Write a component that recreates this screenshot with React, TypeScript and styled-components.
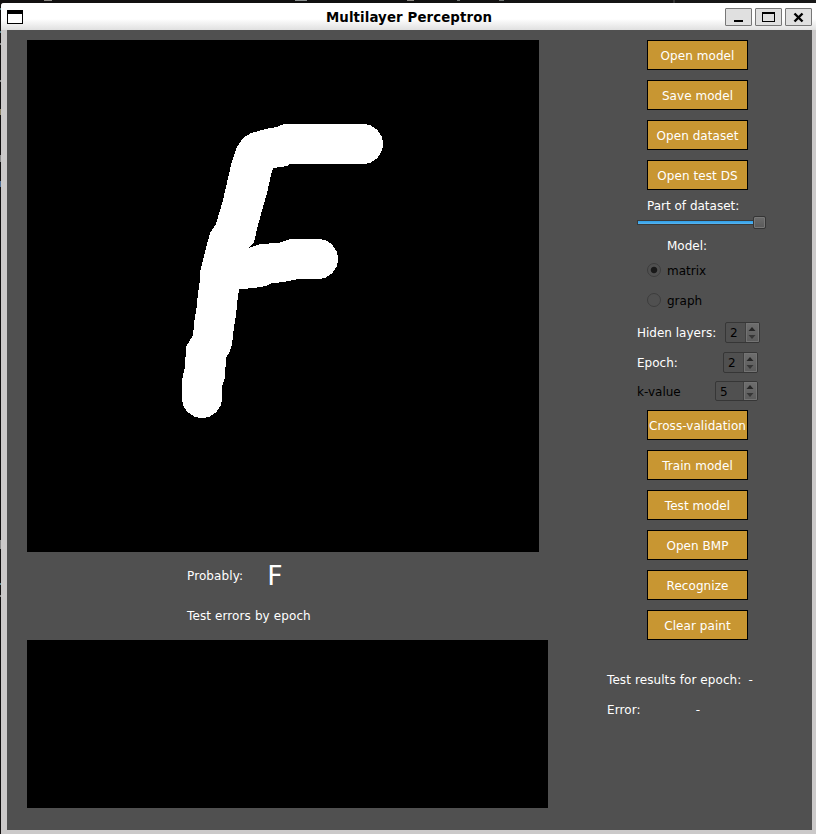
import React from "react";
import styled, { createGlobalStyle } from "styled-components";

const GlobalStyle = createGlobalStyle`
  * { box-sizing: border-box; }
  html, body { margin: 0; padding: 0; overflow: hidden; background: #0d0d0d; }
  body { font: 12px/14px "DejaVu Sans", sans-serif; color: #fff; }
`;

const Desktop = styled.div`
  width: 816px;
  height: 834px;
  padding: 3px 0 0 1px;
  background:
    linear-gradient(#8a8782, #8a8782) 44px 0 / 8px 1px no-repeat,
    linear-gradient(#8a8f8f, #8a8f8f) 295px 0 / 12px 1px no-repeat,
    linear-gradient(#8a8782, #8a8782) 407px 0 / 7px 1px no-repeat,
    linear-gradient(#6f7472, #6f7472) 457px 0 / 3px 1px no-repeat,
    linear-gradient(#6f7472, #6f7472) 499px 0 / 5px 1px no-repeat,
    linear-gradient(#333, #333) 673px 0 / 2px 3px no-repeat,
    linear-gradient(#5d8791, #5d8791) 0 8px / 1px 2px no-repeat,
    linear-gradient(#5d8791, #5d8791) 0 31px / 1px 2px no-repeat,
    linear-gradient(#888, #888) 0 43px / 1px 2px no-repeat,
    linear-gradient(#888, #888) 0 80px / 1px 2px no-repeat,
    linear-gradient(#8c8468, #8c8468) 0 109px / 1px 6px no-repeat,
    linear-gradient(#888, #888) 0 155px / 1px 7px no-repeat,
    linear-gradient(#4f6f96, #4f6f96) 0 181px / 1px 6px no-repeat,
    linear-gradient(#888, #888) 0 540px / 1px 9px no-repeat,
    linear-gradient(#5d8791, #5d8791) 0 583px / 1px 2px no-repeat,
    linear-gradient(#888, #888) 0 595px / 1px 2px no-repeat,
    linear-gradient(90deg, #121010, #101010 40%, #171717);
`;

const Window = styled.div`
  display: flex;
  flex-direction: column;
  height: 831px;
  background: #cbc9c9;
  border-top-left-radius: 3px;
  overflow: hidden;
`;

const TitleBar = styled.header`
  flex: none;
  height: 27px;
  display: grid;
  grid-template-columns: 91px 1fr 91px;
  align-items: center;
  background: linear-gradient(#fff 0, #fff 16px, #f6f6f6 19px, #e0e0e0 27px);
`;

const WindowIcon = styled.svg`
  display: block;
  margin-left: 6px;
`;

const Title = styled.h1`
  margin: 0;
  padding: 2px 0 0 1px;
  font-size: 13.33px;
  line-height: 16px;
  font-weight: 700;
  letter-spacing: 0.11px;
  text-align: center;
  color: #000;
`;

const WindowControls = styled.div`
  display: flex;
  gap: 3px;
  padding-top: 1px;
`;

const ControlButton = styled.button`
  width: 27px;
  height: 18px;
  padding: 0;
  border: 1px solid #777;
  border-radius: 1px;
  background: #e0e0e0;

  svg { display: block; }
`;

const Body = styled.main`
  display: flex;
  width: 805px;
  height: 800px;
  margin-left: 6px;
  padding: 10px 0 0 20px;
  background: #505050;
`;

const Workspace = styled.section`
  width: 580px;
  flex: none;
  letter-spacing: 0.11px;
`;

const Canvas = styled.div`
  width: 512px;
  height: 512px;
  background: #000;

  svg { display: block; }
`;

const CanvasCaption = styled.div`
  display: flex;
  align-items: center;
  height: 48px;
  padding-left: 160px;
`;

const Guess = styled.span`
  margin-left: 24px;
  font-size: 26.67px;
  line-height: 30px;
`;

const ChartCaption = styled.div`
  height: 40px;
  padding: 9px 0 0 160px;
`;

const ErrorChart = styled.div`
  width: 521px;
  height: 168px;
  background: #000;
`;

const Sidebar = styled.aside`
  width: 205px;
  display: flex;
  flex-direction: column;
`;

const ButtonStack = styled.div`
  display: flex;
  flex-direction: column;
  gap: 10px;
  margin-left: 40px;
`;

const ModelActions = styled(ButtonStack)`
  margin-top: 3px;
`;

const ActionButton = styled.button`
  width: 101px;
  height: 30px;
  padding: 1px 0 0;
  border: 1px solid #000;
  background: #c89632;
  color: #fff;
  font: inherit;
  letter-spacing: 0.06px;
  text-align: center;
  white-space: nowrap;
`;

const Caption = styled.div<{ $indent: number; $height: number }>`
  height: ${(p) => p.$height}px;
  padding-left: ${(p) => p.$indent}px;
  display: flex;
  align-items: center;
`;

const Slider = styled.div`
  display: flex;
  align-items: center;
  width: 129px;
  height: 13px;
  margin: -6px 0 8px 30px;
`;

const SliderTrack = styled.div`
  flex: 1;
  height: 5px;
  border: 1px solid #3a3a3a;
  border-right: 0;
  border-radius: 1px 0 0 1px;
  background: linear-gradient(#2f9ee8, #57b5f0);
`;

const SliderHandle = styled.div`
  width: 13px;
  height: 13px;
  border: 1px solid #353535;
  border-radius: 2px;
  background: linear-gradient(#6c6c6c, #5a5a5a);
  box-shadow: inset 0 0 0 1px #777;
`;

const RadioRow = styled.label`
  display: flex;
  align-items: center;
  gap: 6px;
  height: 30px;
  padding-left: 40px;
  color: #000;
`;

const RadioText = styled.span`
  padding-top: 2px;
`;

const RadioDot = styled.span<{ $checked?: boolean }>`
  width: 14px;
  height: 14px;
  border: 1px solid #3d3d3d;
  border-radius: 50%;
  background: ${(p) =>
    p.$checked ? "radial-gradient(circle, #191919 0 2.8px, #505050 3.7px)" : "#505050"};
`;

const SpinRow = styled.div<{ $dark?: boolean; $height: number }>`
  display: flex;
  align-items: center;
  height: ${(p) => p.$height}px;
  padding-left: 30px;
  color: ${(p) => (p.$dark ? "#000" : "#fff")};
`;

const SpinLabel = styled.span<{ $width: number; $drop: number }>`
  width: ${(p) => p.$width}px;
  padding-top: ${(p) => p.$drop}px;
  white-space: nowrap;
`;

const SpinBox = styled.div<{ $width: number; $height: number }>`
  display: flex;
  justify-content: space-between;
  width: ${(p) => p.$width}px;
  height: ${(p) => p.$height}px;
  padding-left: 4px;
  border: 1px solid #363636;
  border-radius: 2px;
  overflow: hidden;
  color: #000;
  line-height: 20px;
`;

const SpinArrows = styled.div`
  display: flex;
  align-items: center;
  width: 14px;
  border-left: 1px solid #404040;
  background: linear-gradient(#6e6e6e, #5b5b5b);
  box-shadow: inset 0 0 0 1px #737373;
`;

const Results = styled.div`
  margin-top: 25px;
  letter-spacing: 0.09px;
`;

const ResultRow = styled.div<{ $gap: number }>`
  display: flex;
  gap: ${(p) => p.$gap}px;
  height: 30px;
  align-items: center;
`;

const strokeOutline =
  "M284 124H363A20 20 0 0 1 363 164H290L287 166L273 168L271 175L267 193L263 207L258 225" +
  "L254 242L249 248L260 244L278 243L290 239H318A20 20 0 0 1 318 279H299L283 282L271 283.5" +
  "L266.5 286L257 287.5L239 289.5L237.5 300L236 315L234 327L232 345L229 353L226 358" +
  "L225 377L222 387V398A20 20 0 0 1 182 398V380L185 367L186 347L193 335L194.5 320" +
  "L196.7 307L198 293L200 280L200.5 270L205 252L210 233L216 224L223 200L228 178" +
  "L232 161L237 147L243 138L251 133L267 128.7L277 127Z";

const DrawnLetter = () => (
  <svg width="512" height="512" viewBox="27 40 512 512" shapeRendering="crispEdges">
    <path d={strokeOutline} fill="#fff" />
  </svg>
);

const Arrows = () => (
  <svg width="13" height="18" viewBox="0 0 13 18">
    <path d="M2.5 7L6 3L9.5 7Z" fill="#262626" />
    <path d="M2.5 11L6 15L9.5 11Z" fill="#363636" />
  </svg>
);

type SpinProps = {
  label: string;
  labelWidth: number;
  width: number;
  value: number;
  rowHeight: number;
  boxHeight?: number;
  labelDrop?: number;
  dark?: boolean;
};

const Spin = ({
  label,
  labelWidth,
  width,
  value,
  rowHeight,
  boxHeight = 21,
  labelDrop = 0,
  dark,
}: SpinProps) => (
  <SpinRow $dark={dark} $height={rowHeight}>
    <SpinLabel $width={labelWidth} $drop={labelDrop}>{label}</SpinLabel>
    <SpinBox $width={width} $height={boxHeight}>
      {value}
      <SpinArrows>
        <Arrows />
      </SpinArrows>
    </SpinBox>
  </SpinRow>
);

const fileActions = ["Open model", "Save model", "Open dataset", "Open test DS"];
const modelActions = [
  "Cross-validation",
  "Train model",
  "Test model",
  "Open BMP",
  "Recognize",
  "Clear paint",
];

export default function App() {
  return (
    <Desktop>
      <GlobalStyle />
      <Window>
        <TitleBar>
          <WindowIcon width="16" height="14" shapeRendering="crispEdges">
            <path d="M0 0H16V14H0Z" fill="#000" />
            <path d="M1 4H15V13H1Z" fill="#fff" />
          </WindowIcon>
          <Title>Multilayer Perceptron</Title>
          <WindowControls>
            <ControlButton aria-label="Minimize">
              <svg width="25" height="16" shapeRendering="crispEdges">
                <path d="M8 11H17V13H8Z" />
              </svg>
            </ControlButton>
            <ControlButton aria-label="Maximize">
              <svg width="25" height="16" shapeRendering="crispEdges">
                <path d="M6 3H19V13H6ZM7 5V12H18V5Z" fillRule="evenodd" />
              </svg>
            </ControlButton>
            <ControlButton aria-label="Close">
              <svg width="25" height="16">
                <path d="M8.5 4.5L16.5 12.5M16.5 4.5L8.5 12.5" stroke="#000" strokeWidth="2.4" />
              </svg>
            </ControlButton>
          </WindowControls>
        </TitleBar>
        <Body>
          <Workspace>
            <Canvas>
              <DrawnLetter />
            </Canvas>
            <CanvasCaption>
              Probably:<Guess>F</Guess>
            </CanvasCaption>
            <ChartCaption>Test errors by epoch</ChartCaption>
            <ErrorChart />
          </Workspace>
          <Sidebar>
            <ButtonStack>
              {fileActions.map((name) => (
                <ActionButton key={name}>{name}</ActionButton>
              ))}
            </ButtonStack>
            <Caption $indent={40} $height={32}>Part of dataset:</Caption>
            <Slider>
              <SliderTrack />
              <SliderHandle />
            </Slider>
            <Caption $indent={60} $height={18}>Model:</Caption>
            <RadioRow>
              <RadioDot $checked />
              <RadioText>matrix</RadioText>
            </RadioRow>
            <RadioRow>
              <RadioDot />
              <RadioText>graph</RadioText>
            </RadioRow>
            <Spin label="Hiden layers:" labelWidth={88} width={35} value={2} rowHeight={35} />
            <Spin label="Epoch:" labelWidth={86} width={35} value={2} rowHeight={25} />
            <Spin
              label="k-value"
              labelWidth={78}
              width={43}
              value={5}
              rowHeight={32}
              boxHeight={20}
              labelDrop={2}
              dark
            />
            <ModelActions>
              {modelActions.map((name) => (
                <ActionButton key={name}>{name}</ActionButton>
              ))}
            </ModelActions>
            <Results>
              <ResultRow $gap={7}>
                <span>Test results for epoch:</span>
                <span>-</span>
              </ResultRow>
              <ResultRow $gap={55}>
                <span>Error:</span>
                <span>-</span>
              </ResultRow>
            </Results>
          </Sidebar>
        </Body>
      </Window>
    </Desktop>
  );
}
